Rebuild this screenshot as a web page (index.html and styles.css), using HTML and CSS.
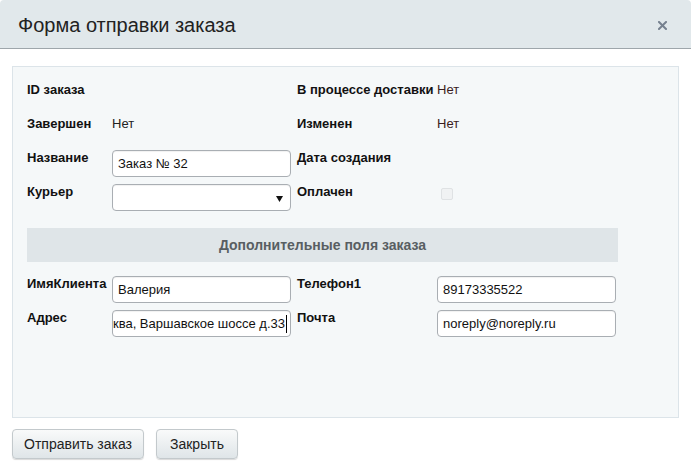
FILE: index.html
```html
<!DOCTYPE html>
<html lang="ru">
<head>
<meta charset="utf-8">
<title>Форма отправки заказа</title>
<link rel="stylesheet" href="styles.css">
</head>
<body>
<div class="dialog">
  <header class="dlg-head">
    <h1 class="dlg-title">Форма отправки заказа</h1>
    <span class="dlg-close" aria-label="Закрыть">
      <svg width="9" height="9" viewBox="0 0 9 9"><path d="M1 1L8 8M8 1L1 8" stroke="#76818f" stroke-width="2" stroke-linecap="square"/></svg>
    </span>
  </header>
  <div class="dlg-body">
    <div class="panel">
      <div class="grid">
        <div class="lbl">ID заказа</div>
        <div class="val"></div>
        <div class="lbl lbl-r">В процессе доставки</div>
        <div class="val val-r">Нет</div>

        <div class="lbl">Завершен</div>
        <div class="val">Нет</div>
        <div class="lbl lbl-r">Изменен</div>
        <div class="val val-r">Нет</div>

        <div class="lbl">Название</div>
        <div class="field"><span class="field-text">Заказ № 32</span></div>
        <div class="lbl lbl-r">Дата создания</div>
        <div class="val"></div>

        <div class="lbl">Курьер</div>
        <div class="field select">
          <svg class="arrow" width="7" height="6" viewBox="0 0 7 6"><path d="M0 0H7L3.5 6Z" fill="#111"/></svg>
        </div>
        <div class="lbl lbl-r">Оплачен</div>
        <div class="val val-r"><span class="check"></span></div>
      </div>

      <div class="section">Дополнительные поля заказа</div>

      <div class="grid">
        <div class="lbl">ИмяКлиента</div>
        <div class="field"><span class="field-text">Валерия</span></div>
        <div class="lbl lbl-r">Телефон1</div>
        <div class="field"><span class="field-text">89173335522</span></div>

        <div class="lbl">Адрес</div>
        <div class="field scrolled"><span class="field-text">Москва, Варшавское шоссе д.33</span><span class="caret"></span></div>
        <div class="lbl lbl-r">Почта</div>
        <div class="field"><span class="field-text">noreply@noreply.ru</span></div>
      </div>
    </div>
    <div class="actions">
      <button class="btn">Отправить заказ</button>
      <button class="btn">Закрыть</button>
    </div>
  </div>
</div>
</body>
</html>
```

FILE: styles.css
```css
html, body {
  margin: 0;
  padding: 0;
  background: #ffffff;
}
body {
  width: 691px;
  height: 473px;
  overflow: hidden;
  font-family: "Liberation Sans", Arial, sans-serif;
  color: #000;
}
.dialog {
  width: 691px;
  height: 473px;
  background: #fff;
}
.dlg-head {
  height: 48px;
  background: #e1e8eb;
  border-bottom: 1px solid #9ea6ab;
  border-radius: 4px 4px 0 0;
  display: flex;
  align-items: center;
  justify-content: space-between;
  padding: 0 24px 0 18px;
  box-sizing: content-box;
}
.dlg-title {
  margin: 0;
  font-size: 20px;
  font-weight: normal;
  color: #222;
  line-height: 24px;
  padding-top: 1px;
}
.dlg-close {
  display: flex;
  width: 9px;
  height: 9px;
  margin-top: 2px;
}
.dlg-body {
  padding: 17px 12px 0 12px;
}
.panel {
  height: 352px;
  box-sizing: border-box;
  background: #f5f8f9;
  border: 1px solid #dce4e9;
  padding: 15px 14px 0 14px;
}
.grid {
  display: grid;
  grid-template-columns: 85px 179px 146px 179px;
  grid-auto-rows: 27px;
  row-gap: 7px;
}
.lbl {
  font-size: 13px;
  font-weight: bold;
  line-height: 15px;
  color: #111;
  white-space: nowrap;
}
.lbl-r {
  padding-left: 6px;
}
.val {
  font-size: 13px;
  line-height: 15px;
  color: #222;
}
.val-r {
  color: #3a1c1c;
}
.field {
  height: 27px;
  box-sizing: border-box;
  background: #fff;
  border: 1px solid #a9aeb3;
  border-radius: 4px;
  box-shadow: inset 0 1px 1px rgba(0,0,0,0.06);
  display: flex;
  align-items: center;
  padding: 0 5px;
  overflow: hidden;
  font-size: 13px;
  color: #111;
  white-space: nowrap;
}
.field-text {
  line-height: 16px;
  padding-top: 1px;
}
.select {
  justify-content: flex-end;
  padding-right: 7px;
}
.arrow {
  margin-top: 2px;
}
.scrolled {
  justify-content: flex-end;
  padding-right: 3px;
}
.caret {
  flex: none;
  width: 1px;
  height: 18px;
  background: #000;
  margin-left: 1px;
}
.check {
  display: block;
  width: 12px;
  height: 12px;
  box-sizing: border-box;
  margin: 4px 0 0 4px;
  border: 1px solid #dfe2e4;
  border-radius: 2px;
  background: #f0f2f3;
}
.section {
  width: 591px;
  height: 34px;
  margin: 17px 0 14px 0;
  background: #dfe5e8;
  display: flex;
  align-items: center;
  justify-content: center;
  font-size: 14px;
  font-weight: bold;
  color: #585e62;
}
.actions {
  display: flex;
  gap: 12px;
  margin-top: 11px;
}
.btn {
  height: 30px;
  box-sizing: border-box;
  padding: 0 11px;
  font-family: "Liberation Sans", Arial, sans-serif;
  font-size: 14px;
  color: #222;
  background: linear-gradient(#f9fafa, #dfe5e8);
  border: 1px solid #c3c9cc;
  border-radius: 4px;
  box-shadow: 0 1px 1px rgba(0,0,0,0.15);
}
.btn + .btn {
  padding: 0 13px;
}
```
